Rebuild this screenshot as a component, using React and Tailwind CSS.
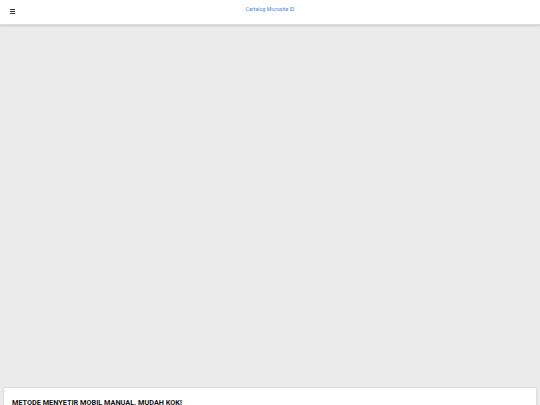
import React from 'react';

const App = () => {
  return (
    <div className="w-[540px] h-[405px] overflow-hidden bg-[#ebebeb] font-['Roboto',sans-serif]">
      {/* Header */}
      <header className="h-[25px] bg-white shadow-[0_1px_2px_rgba(0,0,0,0.15)] border-b border-[#dcdcdc] flex items-center relative">
        <div className="pl-[10px] flex flex-col gap-[1px] -mt-[1px]">
          <span className="block w-[5px] h-[1px] bg-[#333]"></span>
          <span className="block w-[5px] h-[1px] bg-[#333]"></span>
          <span className="block w-[5px] h-[1px] bg-[#333]"></span>
        </div>
        <div className="absolute left-0 right-0 top-[6px] text-center text-[5.2px] leading-[6px] text-[#3b8ad9]">
          Cartalog Microsite ID
        </div>
      </header>

      {/* Media placeholder */}
      <div className="h-[363px]"></div>

      {/* Card */}
      <div className="mx-[4px] bg-white shadow-[0_0_2px_rgba(0,0,0,0.2)] pt-[10px] px-[8px]">
        <h1 className="text-[7.3px] leading-[9px] font-bold text-[#111] uppercase">
          Metode Menyetir Mobil Manual. Mudah Kok!
        </h1>
      </div>
    </div>
  );
};

export default App;
